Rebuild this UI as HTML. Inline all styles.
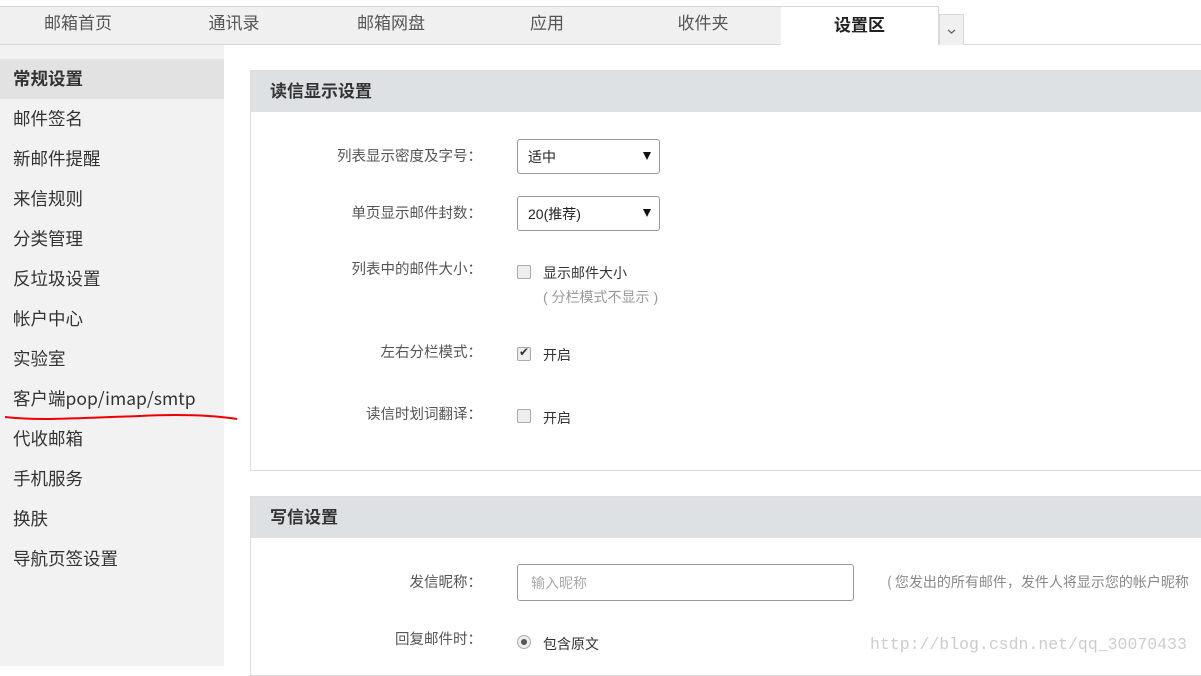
<!DOCTYPE html>
<html><head><meta charset="utf-8">
<style>
*{margin:0;padding:0;box-sizing:border-box}
body{width:1201px;height:666px;overflow:hidden;background:#fff;font-family:"Liberation Sans","Noto Sans CJK SC",sans-serif;color:#333;position:relative}
.nav{position:absolute;top:6px;left:0;width:1201px;height:39px;border-bottom:1px solid #d8d8d8}
.nav .bg{position:absolute;left:0;top:0;width:939px;height:38px;background:#f0f0f0;border-top:1px solid #d8d8d8}
.tab{position:absolute;top:0;height:37px;line-height:36px;font-size:17px;color:#555;text-align:center;width:156px}
.tab.act{background:#fff;color:#222;font-weight:bold;border-right:1px solid #d8d8d8;height:39px;line-height:38px;border-top:1px solid #d8d8d8}
.dd{position:absolute;left:939px;top:14px;width:25px;height:31px;background:#f0f0f0;border:1px solid #d8d8d8;border-bottom:none}
.side{position:absolute;left:0;top:45px;width:224px;height:621px;background:#f2f2f2}
.si{position:absolute;left:0;width:224px;height:40px;line-height:40px;padding-left:13px;font-size:17.5px;color:#333;font-family:"Noto Sans CJK SC","Liberation Sans",sans-serif}
.si.act{background:#e2e2e2;font-weight:bold}
.panel{position:absolute;left:250px;width:960px;border:1px solid #ddd;border-right:none}
.ph{height:41px;background:#dee1e4;font-size:17px;font-weight:bold;color:#333;padding-left:19px;line-height:42px}
.row{position:absolute;left:0;width:960px}
.lbl{position:absolute;left:0;width:231px;text-align:right;font-size:14.5px;color:#555;font-family:"Noto Sans CJK SC",sans-serif;line-height:20px}
.sel{position:absolute;left:266px;width:143px;height:35px;border:1px solid #999;border-radius:3px;font-size:14px;line-height:35px;padding-left:10px;color:#222}
.sel:after{content:"";position:absolute;right:8px;top:12px;border-left:4px solid transparent;border-right:4px solid transparent;border-top:8px solid #111}
.cb{position:absolute;left:266px;width:14px;height:14px;border:1px solid #aaa;border-radius:2px;background:#eee}
.t{position:absolute;font-size:14px;color:#333}
</style></head><body>
<div class="nav"><div class="bg"></div>
<div class="tab" style="left:0">邮箱首页</div>
<div class="tab" style="left:156px">通讯录</div>
<div class="tab" style="left:313px">邮箱网盘</div>
<div class="tab" style="left:469px">应用</div>
<div class="tab" style="left:625px">收件夹</div>
<div class="tab act" style="left:781px;width:158px">设置区</div>
</div>
<div class="dd"><svg width="23" height="30"><path d="M8 15 L11.5 18 L15 15" stroke="#666" stroke-width="1.3" fill="none"/></svg></div>
<div class="side">
<div class="si act" style="top:14px">常规设置</div>
<div class="si" style="top:54px">邮件签名</div>
<div class="si" style="top:94px">新邮件提醒</div>
<div class="si" style="top:134px">来信规则</div>
<div class="si" style="top:174px">分类管理</div>
<div class="si" style="top:214px">反垃圾设置</div>
<div class="si" style="top:254px">帐户中心</div>
<div class="si" style="top:294px">实验室</div>
<div class="si" style="top:334px">客户端pop/imap/smtp</div>
<div class="si" style="top:374px">代收邮箱</div>
<div class="si" style="top:414px">手机服务</div>
<div class="si" style="top:454px">换肤</div>
<div class="si" style="top:494px">导航页签设置</div>
</div>
<svg style="position:absolute;left:0;top:405px" width="240" height="20"><path d="M5 12 C40 16 80 13 140 11 C180 9 210 10 237 14" stroke="#e00" stroke-width="2" fill="none"/></svg>
<div class="panel" style="top:70px;height:401px">
<div class="ph">读信显示设置</div>
<div class="row" style="top:68px"><div class="lbl" style="top:7px">列表显示密度及字号：</div><div class="sel" style="top:0">适中</div></div>
<div class="row" style="top:125px"><div class="lbl" style="top:7px">单页显示邮件封数：</div><div class="sel" style="top:0">20(推荐)</div></div>
<div class="row" style="top:188px"><div class="lbl">列表中的邮件大小：</div><div class="cb" style="top:6px"></div><div class="t" style="left:292px;top:4px">显示邮件大小</div><div class="t" style="left:292px;top:28px;color:#999">( 分栏模式不显示 )</div></div>
<div class="row" style="top:271px"><div class="lbl">左右分栏模式：</div><div class="cb" style="top:5px"></div><div class="t" style="left:268px;top:3px;font-size:12px">✔</div><div class="t" style="left:292px;top:3px">开启</div></div>
<div class="row" style="top:333px"><div class="lbl">读信时划词翻译：</div><div class="cb" style="top:5px"></div><div class="t" style="left:292px;top:4px">开启</div></div>
</div>
<div class="panel" style="top:496px;height:180px">
<div class="ph">写信设置</div>
<div class="row" style="top:67px"><div class="lbl" style="top:8px">发信昵称：</div><div style="position:absolute;left:266px;top:0;width:337px;height:37px;border:1px solid #999;border-radius:3px;font-size:14px;color:#aaa;line-height:36px;padding-left:13px">输入昵称</div><div class="t" style="left:636px;top:8px;color:#888;white-space:nowrap;font-family:'Noto Sans CJK SC',sans-serif">( 您发出的所有邮件，发件人将显示您的帐户昵称</div></div>
<div class="row" style="top:132px"><div class="lbl">回复邮件时：</div><div style="position:absolute;left:266px;top:6px;width:14px;height:14px;border:1px solid #aaa;border-radius:50%;background:#eee"><div style="position:absolute;left:3px;top:3px;width:6px;height:6px;border-radius:50%;background:#555"></div></div><div class="t" style="left:292px;top:5px">包含原文</div></div>
</div>
<div style="position:absolute;left:870px;top:635px;font-family:'Liberation Mono',monospace;font-size:16.5px;color:#ccc">http://blog.csdn.net/qq_30070433</div>
</body></html>
